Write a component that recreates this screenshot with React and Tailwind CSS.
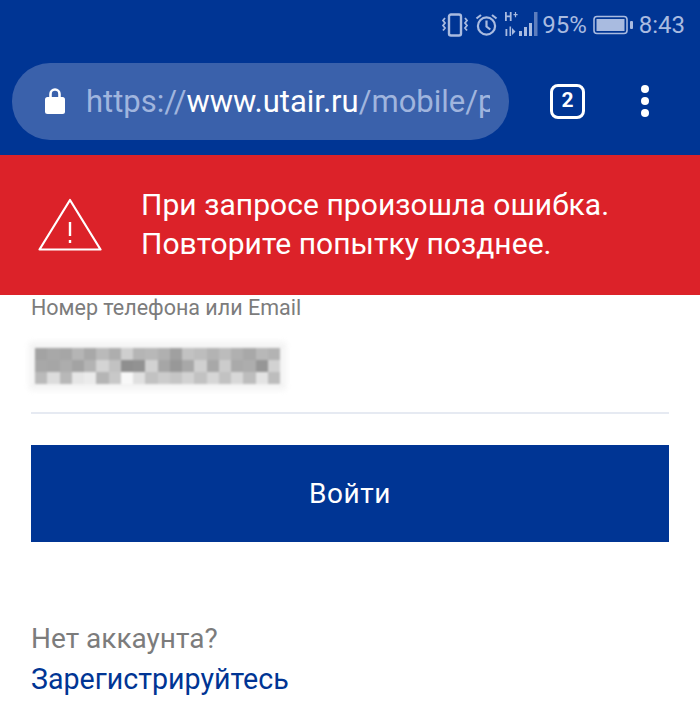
const pixels = [
  ["#a3a3a3","#a8a8a8","#a6a6a6","#b5b5b5","#a8a8a8","#bababa","#aeaeae","#cfcfcf","#b5b5b5","#b8b8b8","#b0b0b0","#a0a0a0","#c2c2c2","#bdbdbd","#b3b3b3","#bcbcbc","#b0b0b0","#a8a8a8","#b8b8b8","#b3b3b3"],
  ["#a8a8a8","#a6a6a6","#adadad","#a3a3a3","#b3b3b3","#d4d4d4","#c2c2c2","#8f8f8f","#929292","#d2d2d2","#a6a6a6","#989898","#a8a8a8","#d0d0d0","#a8a8a8","#cccccc","#aaaaaa","#adadad","#969696","#d2d2d2"],
  ["#bababa","#dcdcdc","#b8b8b8","#e6e6e6","#ebebeb","#b5b5b5","#c8c8c8","#f8f8f8","#e0e0e0","#c2c2c2","#cccccc","#c5c5c5","#d2d2d2","#c2c2c2","#d6d6d6","#c2c2c2","#d8d8d8","#bdbdbd","#e3e3e3","#bdbdbd"],
];

function StatusIcons() {
  return (
    <div className="flex items-center h-[50px] justify-end pr-[15px] text-[#a9bbe0] text-[24px] font-['Roboto',sans-serif]">
      <svg width="28" height="26" viewBox="0 0 28 26" fill="none" stroke="#a9bbe0" strokeWidth="2" className="mr-[6px]">
        <rect x="8" y="2.5" width="12" height="21" rx="2" strokeWidth="2.4" />
        <path d="M4 6 l-2 2.5 2 2.5 -2 2.5 2 2.5 -2 2.5 M24 6 l2 2.5 -2 2.5 2 2.5 -2 2.5 2 2.5" strokeWidth="1.8" />
      </svg>
      <svg width="23" height="26" viewBox="0 0 23 26" fill="none" stroke="#a9bbe0" strokeWidth="2.2" className="mr-[6px]">
        <circle cx="11.5" cy="14" r="8.6" />
        <path d="M11.5 8.5 v6 l3.8 3 M1.5 6.5 l4.5 -3.5 M21.5 6.5 l-4.5 -3.5" />
      </svg>
      <svg width="36" height="28" viewBox="0 0 36 28" className="mr-[2px]" fill="#a9bbe0">
        <rect x="25" y="12" width="3" height="13" />
        <rect x="20" y="16" width="3" height="9" />
        <rect x="15" y="20" width="3" height="5" />
        <rect x="30" y="1" width="3.5" height="24" fill="#5d7dbd" />
        <path d="M1 1h1.8v3.4h3v-3.4h1.8v9h-1.8v-3.8h-3v3.8h-1.8z" />
        <path d="M9.5 3h1.4v-2h1.2v2h1.5v1.2h-1.5v2h-1.2v-2h-1.4z" />
        <path d="M1.5 18h1.8v7h-1.8z M5.5 15.5h1.6v9.5h-1.6z M8 17l3.5 3.5-3.5 3.5z" />
      </svg>
      <span className="mr-[6px]">95%</span>
      <svg width="40" height="20" viewBox="0 0 40 20" className="mr-[6px]" fill="none">
        <rect x="1" y="1.5" width="33" height="17" rx="3" stroke="#a9bbe0" strokeWidth="1.6" />
        <rect x="3.5" y="4" width="28" height="12" fill="#a9bbe0" />
        <rect x="37" y="6" width="3" height="8" rx="1" fill="#a9bbe0" />
      </svg>
      <span>8:43</span>
    </div>
  );
}

function Toolbar() {
  return (
    <div className="flex items-center h-[105px] pl-3 pb-[3px]">
      <div className="flex items-center w-[497px] h-[77px] rounded-[38px] bg-[#3a61ab] pl-[32px] pr-[19px]">
        <svg width="22" height="28" viewBox="0 0 22 28" fill="white" className="shrink-0 mr-[20px]">
          <path d="M6.5 10 V7 a4.5 4.5 0 0 1 9 0 V10" fill="none" stroke="white" strokeWidth="2.6" />
          <rect x="1" y="10" width="20" height="17" rx="2.5" />
        </svg>
        <div className="overflow-hidden whitespace-nowrap text-[31px] leading-[40px] pt-[2px] font-['Roboto',sans-serif] text-[#a0b5de]">
          https://<span className="text-white">www.utair.ru</span>/mobile/p
        </div>
      </div>
      <div className="ml-[41px] w-[35px] h-[35px] rounded-[8px] border-[3px] border-white flex items-center justify-center text-white text-[21px] font-bold font-['Roboto',sans-serif]">
        2
      </div>
      <div className="ml-[56px] flex flex-col gap-[4px]">
        <div className="w-[8px] h-[8px] rounded-full bg-white" />
        <div className="w-[8px] h-[8px] rounded-full bg-white" />
        <div className="w-[8px] h-[8px] rounded-full bg-white" />
      </div>
    </div>
  );
}

function ErrorBanner() {
  return (
    <div className="flex items-center h-[140px] bg-[#dc2229] pl-[38px] text-white">
      <svg width="64" height="54" viewBox="0 0 64 54" fill="none" stroke="white" strokeWidth="2.2" strokeLinejoin="round" className="shrink-0 mr-[39px]">
        <path d="M32 2 L62.5 51.5 H1.5 Z" />
        <path d="M32 24 V38 M32 42 V45" strokeWidth="2.4" />
      </svg>
      <div className="text-[30px] leading-[39px] tracking-[0.05px] font-['Roboto',sans-serif] pb-[2px]">
        <div>При запросе произошла ошибка.</div>
        <div>Повторите попытку позднее.</div>
      </div>
    </div>
  );
}

export default function App() {
  return (
    <div className="w-[700px] h-[712px] overflow-hidden bg-white font-['Roboto',sans-serif]">
      <div className="bg-[#003594]">
        <StatusIcons />
        <Toolbar />
      </div>
      <ErrorBanner />
      <div className="px-[31px]">
        <div className="text-[#7c7c7c] text-[21.5px] leading-[24px] pt-[1px]">Номер телефона или Email</div>
        <div className="h-[94px] border-b-2 border-[#e6eaf2] pt-[28px] pl-[4px]">
          <div className="w-[245px] grid grid-cols-[repeat(20,12.25px)] grid-rows-[repeat(3,12px)] blur-[1px] shadow-[0_0_6px_6px_#f3f3f3]">
            {pixels.flat().map((c, i) => (
              <div key={i} className="h-[12px]" style={{ backgroundColor: c }} />
            ))}
          </div>
        </div>
        <button className="mt-[31px] w-full h-[97px] bg-[#003594] text-white text-[28px] tracking-[0.6px] flex items-center justify-center">
          Войти
        </button>
        <div className="mt-[77px] text-[#7c7c7c] text-[28px] leading-[40px]">Нет аккаунта?</div>
        <div className="text-[#003594] text-[28.6px] leading-[40px]">Зарегистрируйтесь</div>
      </div>
    </div>
  );
}
